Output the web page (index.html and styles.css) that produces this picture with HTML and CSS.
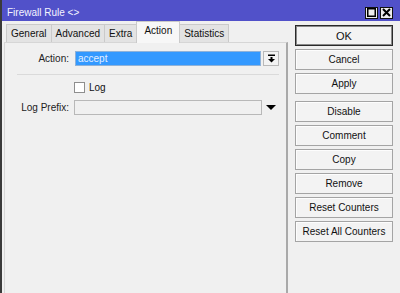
FILE: index.html
```html
<!DOCTYPE html>
<html lang="en">
<head>
    <meta charset="UTF-8">
    <meta name="viewport" content="width=device-width, initial-scale=1.0">
    <title>Firewall Rule</title>
    <link rel="stylesheet" href="styles.css">
</head>
<body>
    <div class="window">
        <div class="titlebar">
            <span class="title">Firewall Rule &lt;&gt;</span>
            <div class="title-buttons">
                <span class="tbtn">
                    <svg width="9" height="9" viewBox="0 0 9 9"><rect x="0.75" y="0.75" width="7.5" height="7.5" fill="none" stroke="#000" stroke-width="1.5"/></svg>
                </span>
                <span class="tbtn">
                    <svg width="9" height="9" viewBox="0 0 9 9"><path d="M1 1 L8 8 M8 1 L1 8" stroke="#000" stroke-width="2"/></svg>
                </span>
            </div>
        </div>

        <div class="main">
            <div class="left">
                <div class="tabs">
                    <span class="tab">General</span>
                    <span class="tab">Advanced</span>
                    <span class="tab">Extra</span>
                    <span class="tab active">Action</span>
                    <span class="tab">Statistics</span>
                </div>
                <div class="panel">
                    <div class="row">
                        <label class="label">Action:</label>
                        <div class="field">
                            <div class="input selected">accept</div>
                            <span class="drop-btn">
                                <svg width="7" height="9" viewBox="0 0 7 9"><rect x="0" y="0.5" width="7" height="1.5" fill="#000"/><rect x="2.5" y="3" width="2" height="2" fill="#000"/><path d="M0 5 L7 5 L3.5 8.5 Z" fill="#000"/></svg>
                            </span>
                        </div>
                    </div>
                    <div class="separator"></div>
                    <div class="row check-row">
                        <span class="label"></span>
                        <div class="field">
                            <span class="checkbox"></span>
                            <span class="check-label">Log</span>
                        </div>
                    </div>
                    <div class="row prefix-row">
                        <label class="label">Log Prefix:</label>
                        <div class="field">
                            <div class="input prefix"></div>
                            <span class="drop-arrow">
                                <svg width="10" height="5" viewBox="0 0 10 5"><path d="M0 0 L10 0 L5 5 Z" fill="#000"/></svg>
                            </span>
                        </div>
                    </div>
                </div>
            </div>

            <div class="buttons">
                <button class="btn default">OK</button>
                <button class="btn">Cancel</button>
                <button class="btn">Apply</button>
                <button class="btn group">Disable</button>
                <button class="btn">Comment</button>
                <button class="btn">Copy</button>
                <button class="btn">Remove</button>
                <button class="btn">Reset Counters</button>
                <button class="btn">Reset All Counters</button>
            </div>
        </div>
    </div>
</body>
</html>
```

FILE: styles.css
```css
html, body {
    margin: 0;
    padding: 0;
}
body {
    width: 400px;
    height: 293px;
    overflow: hidden;
    background-color: #f0f0f0;
    font-family: "Liberation Sans", Arial, sans-serif;
    font-size: 10px;
    color: #1a1a1a;
}
.window {
    height: 293px;
    border-left: 2px solid #3a3a3a;
    box-sizing: border-box;
}
.titlebar {
    height: 21px;
    background-color: #5151c9;
    display: flex;
    align-items: center;
    justify-content: space-between;
    padding-left: 5px;
    padding-right: 7px;
}
.title {
    color: #f4f4ff;
    font-size: 10px;
    margin-top: 3px;
}
.title-buttons {
    display: flex;
    gap: 2px;
    margin-top: 4px;
}
.tbtn {
    width: 11px;
    height: 10px;
    border: 1px solid #111;
    background: #ececec;
    display: flex;
    align-items: center;
    justify-content: center;
}
.main {
    display: flex;
}
.left {
    width: 286px;
}
.tabs {
    display: flex;
    align-items: flex-end;
    height: 20px;
    margin-top: 1px;
    padding-left: 4px;
    position: relative;
    z-index: 1;
}
.tab {
    height: 17px;
    line-height: 17px;
    padding: 0 4px;
    margin-left: -1px;
    border: 1px solid #cacaca;
    border-bottom: none;
    background-color: #e3e3e3;
    color: #111;
}
.tab:first-child {
    margin-left: 0;
}
.tab.active {
    height: 21px;
    line-height: 18px;
    padding: 0 7px;
    background-color: #f7f7f7;
    margin-bottom: -1px;
    position: relative;
}
.panel {
    margin: 0 0 0 2px;
    height: 260px;
    border: 1px solid #d6d6d6;
    border-right: 2px solid #a9a9a9;
    padding: 8px 7px 0 0;
    box-sizing: border-box;
}
.row {
    display: grid;
    grid-template-columns: 64px 1fr;
    column-gap: 6px;
    align-items: center;
    height: 15px;
}
.label {
    text-align: right;
    color: #222;
}
.field {
    display: flex;
    align-items: center;
    height: 100%;
}
.input {
    height: 15px;
    box-sizing: border-box;
    line-height: 13px;
    padding-left: 2px;
}
.input.selected {
    flex: 1;
    background-color: #3399ff;
    border: 1px solid #8fb2d8;
    color: #e3efff;
}
.drop-btn {
    width: 16px;
    height: 15px;
    margin-left: 2px;
    box-sizing: border-box;
    border: 1px solid #b9b9b9;
    background: #f3f3f3;
    display: flex;
    align-items: center;
    justify-content: center;
}
.separator {
    height: 1px;
    background-color: #dadada;
    margin: 8px 0 7px 12px;
}
.check-row {
    height: 11px;
}
.checkbox {
    width: 9px;
    height: 9px;
    border: 1px solid #8e8e8e;
    background: #fff;
    margin-left: -1px;
}
.check-label {
    margin-left: 4px;
    color: #111;
}
.prefix-row {
    margin-top: 7px;
}
.input.prefix {
    width: 188px;
    margin-left: -1px;
    border: 1px solid #b8b8b8;
    background-color: #f0f0f0;
}
.drop-arrow {
    width: 16px;
    display: flex;
    justify-content: center;
    margin-left: 1px;
}
.buttons {
    display: flex;
    flex-direction: column;
    gap: 3px;
    margin-left: 7px;
    padding-top: 4px;
    width: 98px;
}
.btn {
    height: 21px;
    padding: 0;
    font-family: "Liberation Sans", Arial, sans-serif;
    font-size: 10px;
    color: #111;
    background-color: #f3f3f3;
    border: 1px solid #a4a4a4;
    box-shadow: inset 1px 1px 0 #fdfdfd;
}
.btn.default {
    border: 1px solid #2a2a2a;
    box-shadow: inset 0 0 0 1px #8a8a8a;
    font-size: 11px;
}
.btn.group {
    margin-top: 4px;
}
```
